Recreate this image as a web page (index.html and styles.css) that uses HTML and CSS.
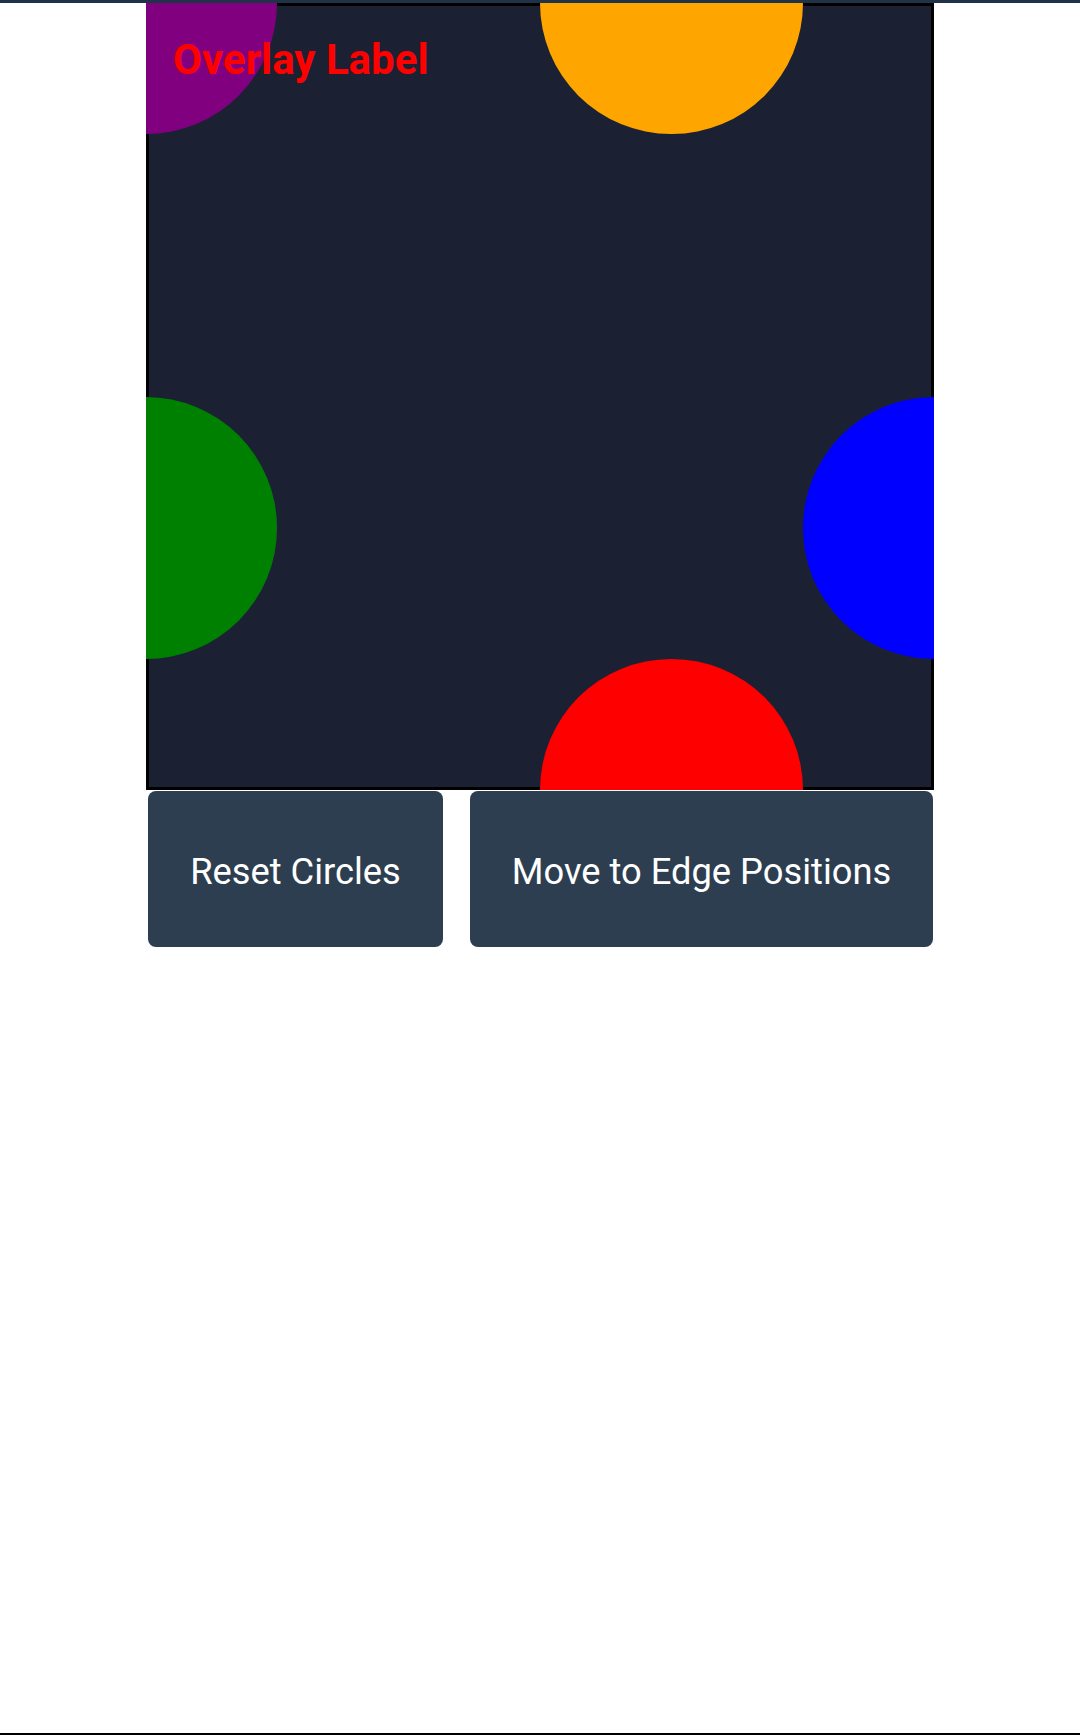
FILE: index.html
```html
<!DOCTYPE html>
<html lang="en">
<head>
<meta charset="utf-8">
<title>Circles</title>
<link rel="stylesheet" href="styles.css">
</head>
<body>
<div class="page">
  <main class="stage">
    <div class="canvas">
      <div class="circle circle-purple"></div>
      <div class="circle circle-orange"></div>
      <div class="circle circle-green"></div>
      <div class="circle circle-blue"></div>
      <div class="circle circle-red"></div>
      <div class="overlay-label">Overlay Label</div>
    </div>
    <div class="controls">
      <button class="btn btn-reset" type="button">Reset Circles</button>
      <button class="btn btn-edge" type="button">Move to Edge Positions</button>
    </div>
  </main>
</div>
</body>
</html>
```

FILE: styles.css
```css
* { box-sizing: border-box; }

html, body {
  margin: 0;
  padding: 0;
  background: #ffffff;
}

body {
  font-family: Roboto, "Liberation Sans", Arial, sans-serif;
}

.page {
  min-height: 100vh;
  border-top: 3px solid #1f3247;
  border-bottom: 2px solid #000000;
  display: flex;
  flex-direction: column;
  align-items: center;
}

.stage {
  width: 788px;
  display: flex;
  flex-direction: column;
}

.canvas {
  position: relative;
  width: 788px;
  height: 787px;
  background: #1b2133;
  box-shadow: inset 0 0 0 3px #000000;
  overflow: hidden;
}

.circle {
  position: absolute;
  width: 33.333%;
  height: 33.333%;
  border-radius: 50%;
}

.circle-purple { background: #800080; left: -16.667%; top: -16.667%; }
.circle-orange { background: #ffa500; left: 50%; top: -16.667%; }
.circle-green  { background: #008000; left: -16.667%; top: 50%; }
.circle-blue   { background: #0000ff; left: 83.333%; top: 50%; }
.circle-red    { background: #ff0000; left: 50%; top: 83.333%; }

.overlay-label {
  position: absolute;
  left: 27px;
  top: 32px;
  color: #ff0000;
  font-size: 42px;
  font-weight: 700;
  line-height: normal;
  white-space: nowrap;
}

.controls {
  display: flex;
  gap: 27px;
  padding: 1px 0 0 2px;
}

.btn {
  font-family: Roboto, "Liberation Sans", Arial, sans-serif;
  font-size: 36.3px;
  line-height: 43px;
  color: #ffffff;
  background: #2d3e51;
  border: none;
  border-radius: 8px;
  padding: 59px 0 54px;
  text-align: center;
  white-space: nowrap;
  cursor: pointer;
}

.btn-reset { flex: 0 0 295px; }
.btn-edge { flex: 0 0 463px; }
```
